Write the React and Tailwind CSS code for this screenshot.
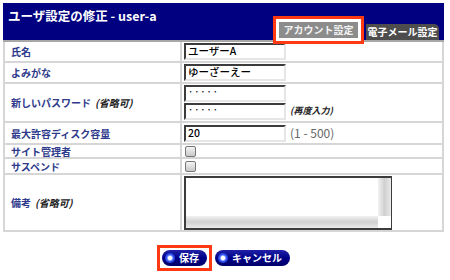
import React from "react";

const F = { fontFamily: '"Noto Sans CJK JP", "Noto Sans", sans-serif' };

function Input({ value, dots }) {
  return (
    <div className="w-[102px] h-[17px] border-2 border-t-[#3c3c3c] border-l-[#3c3c3c] border-b-[#e6e6e6] border-r-[#e6e6e6] bg-white flex items-center pl-[2px] text-[10.5px] font-medium text-black leading-none">
      {dots ? <span className="tracking-[1px] text-[9px] -mt-[4px]">·····</span> : value}
    </div>
  );
}

function Checkbox() {
  return (
    <div className="w-[11px] h-[11px] rounded-[2px] border border-[#777] bg-gradient-to-b from-[#f4f4f4] to-[#c8c8c8]" />
  );
}

function Label({ children, opt }) {
  return (
    <div className="w-[177px] shrink-0 flex items-center pl-[6px] border-r-2 border-[#d6d6d6] text-[10px] font-bold text-[#2e3a8c]">
      {children}
      {opt && <span className="italic text-[#222] ml-[4px]">(省略可)</span>}
    </div>
  );
}

function Row({ label, opt, children, cls = "" }) {
  return (
    <div className={"flex border-b-2 border-[#d6d6d6] " + cls}>
      <Label opt={opt}>{label}</Label>
      <div className="flex-1 flex pl-[2px]">{children}</div>
    </div>
  );
}

function Btn({ children }) {
  return (
    <div className="h-[16px] rounded-full bg-gradient-to-b from-[#2020a8] via-[#000088] to-[#00006a] flex items-center pl-[3px] pr-[8px] gap-[4px]">
      <div className="w-[10px] h-[10px] rounded-full bg-[radial-gradient(circle,#ffffff_0%,#ffffff_25%,#3a5cff_45%,#0a1a9a_100%)]" />
      <span className="text-white text-[10px] font-bold leading-none">{children}</span>
    </div>
  );
}

export default function App() {
  return (
    <div className="w-[450px] h-[280px] bg-white pt-[3px] pl-[3px] relative" style={F}>
      <div className="w-[441px]">
        {/* header */}
        <div className="h-[37px] bg-[#000080] flex justify-between">
          <div className="text-white font-bold text-[12.5px] pl-[5px] pt-[4px] leading-[18px]">ユーザ設定の修正 - user-a</div>
          <div className="flex items-end pr-[5px]">
            <div className="border-[3px] border-[#ff3a12] bg-white pt-[3px] px-[3px] pb-[3px] mb-[-4px] relative z-10">
              <div className="h-[16px] w-[79px] bg-[#8c8c8c] flex items-center justify-center text-[10px] font-bold text-[#f2f2f2] leading-none">アカウント設定</div>
            </div>
            <div className="h-[16px] w-[73px] bg-[#4d4d4d] rounded-tr-[5px] flex items-center justify-center text-[10px] font-bold text-white leading-none ml-[2px]">電子メール設定</div>
          </div>
        </div>
        <div className="h-[2px] bg-[#a8a8a8]" />
        {/* table */}
        <div className="border-l-2 border-r-2 border-[#d6d6d6]">
          <Row label="氏名" cls="h-[21px]">
            <div className="flex items-center"><Input value="ユーザーA" /></div>
          </Row>
          <Row label="よみがな" cls="h-[21px]">
            <div className="flex items-center"><Input value="ゆーざーえー" /></div>
          </Row>
          <Row label="新しいパスワード" opt cls="h-[39px]">
            <div className="flex flex-col justify-center gap-[1px]">
              <Input dots />
              <Input dots />
            </div>
            <div className="flex items-end pb-[4px] pl-[4px] text-[9px] font-bold italic text-[#222]">(再度入力)</div>
          </Row>
          <Row label="最大許容ディスク容量" cls="h-[22px]">
            <div className="flex items-center"><Input value="20" /></div>
            <div className="flex items-center pl-[4px] text-[12px] text-[#666]">(1 - 500)</div>
          </Row>
          <Row label="サイト管理者" cls="h-[14px]">
            <div className="flex items-center pl-[1px]"><Checkbox /></div>
          </Row>
          <Row label="サスペンド" cls="h-[16px]">
            <div className="flex items-center pl-[1px]"><Checkbox /></div>
          </Row>
          <Row label="備考" opt cls="h-[57px]">
            <div className="flex items-center">
              <div className="w-[208px] h-[54px] border-2 border-[#3c3c3c] border-r-[1px] bg-white flex">
                <div className="flex-1 flex flex-col">
                  <div className="flex-1" />
                  <div className="h-[12px] bg-gradient-to-b from-[#f2f2f2] via-[#d0d0d0] to-[#eaeaea]" />
                </div>
                <div className="w-[13px] flex flex-col">
                  <div className="flex-1 bg-gradient-to-r from-[#f2f2f2] via-[#d0d0d0] to-[#eaeaea]" />
                  <div className="h-[12px] bg-white" />
                </div>
              </div>
            </div>
          </Row>
        </div>
        {/* buttons */}
        <div className="flex justify-center items-center gap-[3px] mt-[13px]">
          <div className="border-[3px] border-[#ff3a12] p-[2px] bg-white">
            <Btn>保存</Btn>
          </div>
          <Btn>キャンセル</Btn>
        </div>
      </div>
    </div>
  );
}
